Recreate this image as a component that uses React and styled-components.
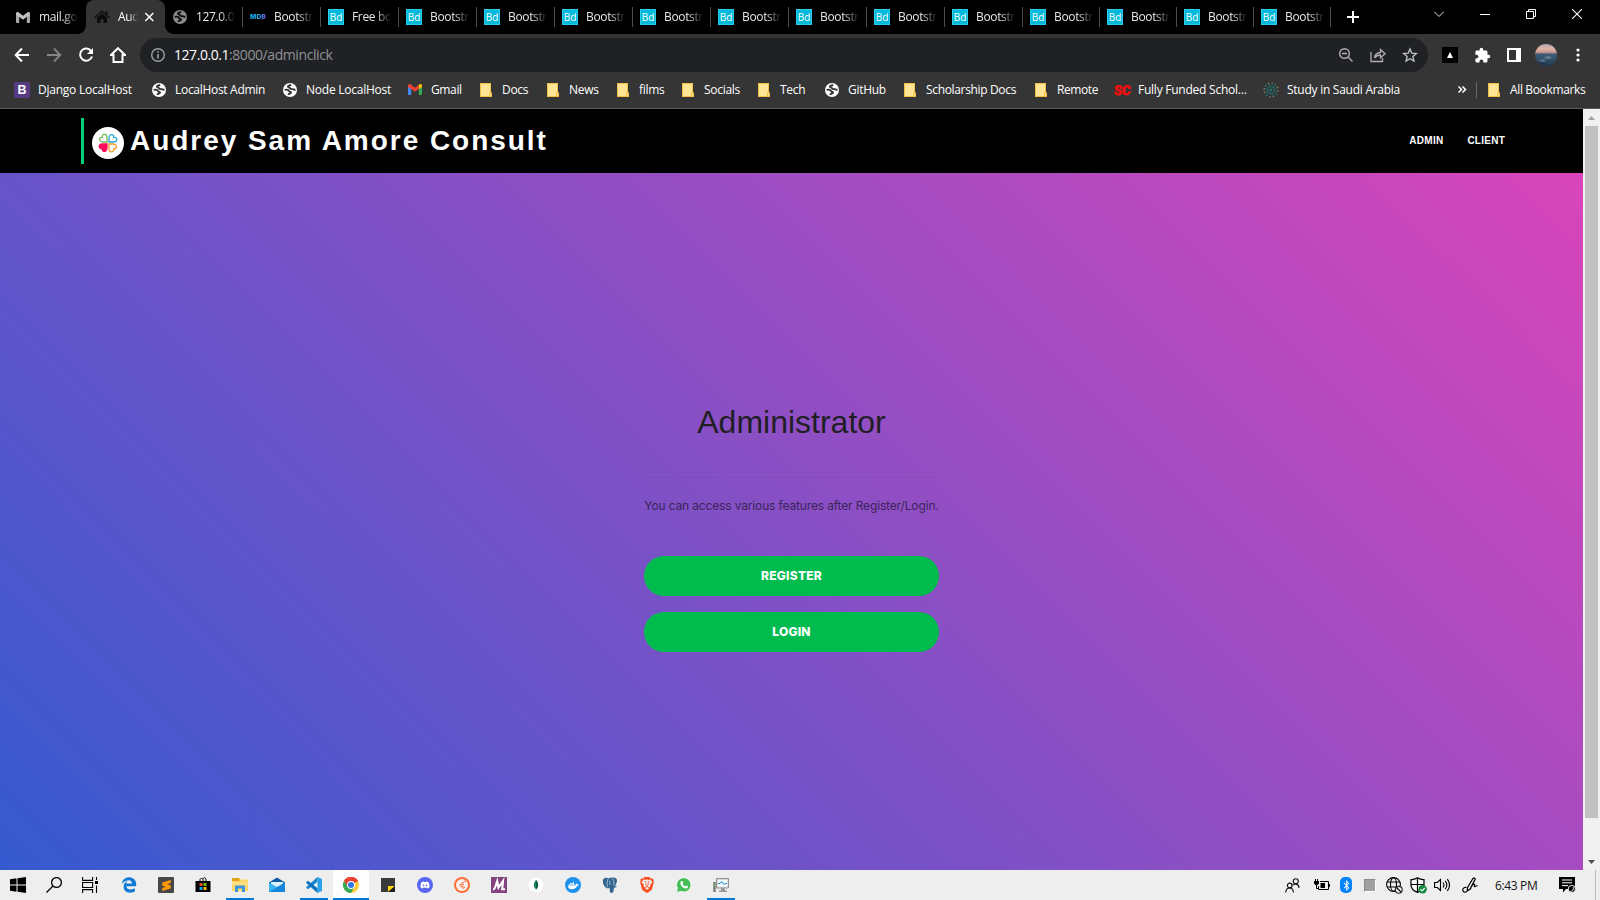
import React from "react";
import styled, { createGlobalStyle, css } from "styled-components";
import { FaDiscord, FaDocker, FaBluetoothB } from "react-icons/fa";
import { FaEdgeLegacy } from "react-icons/fa6";
import { SiBrave, SiSublimetext } from "react-icons/si";
import { MdExtension } from "react-icons/md";

const UI_FONT = `"Open Sans", "Noto Sans", sans-serif`;

const GlobalStyle = createGlobalStyle`
  *, *::before, *::after { box-sizing: border-box; }
  body { margin: 0; overflow: hidden; font-family: ${UI_FONT}; }
  svg { display: block; flex: none; }
`;

const Screen = styled.div`
  width: 1600px;
  height: 900px;
  display: flex;
  flex-direction: column;
  background: #000;
  white-space: nowrap;
`;

/* ---------- browser chrome ---------- */

const TabStrip = styled.div`
  height: 34px;
  flex: none;
  display: flex;
  padding-left: 8px;
  background: #000;
`;

const Tab = styled.div`
  width: ${(p) => p.$width}px;
  display: flex;
  align-items: center;
  padding-left: 7px;
  color: #e6e6e6;
`;

const ActiveTab = styled.div`
  position: relative;
  width: 79px;
  display: flex;
  align-items: center;
  padding-left: 8px;
  border-radius: 8px 8px 0 0;
  background: #353535;
  color: #fff;
  &::before,
  &::after {
    content: "";
    position: absolute;
    bottom: 0;
    width: 8px;
    height: 8px;
  }
  &::before {
    left: -8px;
    background: radial-gradient(circle at 0 0, transparent 7.5px, #353535 8px);
  }
  &::after {
    right: -8px;
    background: radial-gradient(circle at 100% 0, transparent 7.5px, #353535 8px);
  }
`;

const TabIcon = styled.div`
  width: 16px;
  height: 16px;
  flex: none;
  margin-right: 8px;
  display: flex;
  align-items: center;
  justify-content: center;
`;

const TabTitle = styled.div`
  width: ${(p) => p.$width || 41}px;
  flex: none;
  font-size: 12px;
  line-height: 18px;
  letter-spacing: -0.35px;
  mask-image: linear-gradient(to right, #000 ${(p) => (p.$width ? 50 : 58)}%, transparent 96%);
`;

const TabDivider = styled.div`
  width: 1px;
  height: 20px;
  margin-left: auto;
  background: #4d4d4d;
`;

const BdMark = styled.div`
  width: 16px;
  height: 16px;
  border: 1px solid #27cdea;
  background: #00b8da;
  color: #fff;
  font: 10px/14px ${UI_FONT};
  letter-spacing: -0.1px;
  text-align: center;
`;

const MdbMark = styled.div`
  font: 900 6.5px/10px Inter, sans-serif;
  letter-spacing: 0.2px;
  background: linear-gradient(90deg, #18a8e8 55%, #7b50e0);
  background-clip: text;
  color: transparent;
`;

const NewTab = styled.div`
  display: flex;
  align-items: center;
  margin-left: 16px;
`;

const WindowControls = styled.div`
  display: flex;
  height: 28px;
  align-items: center;
  margin-left: auto;
`;

const WindowButton = styled.div`
  width: 46px;
  display: flex;
  justify-content: center;
`;

const Toolbar = styled.div`
  height: 38px;
  flex: none;
  display: flex;
  align-items: center;
  padding: 4px 0 0 6px;
  background: #353535;
`;

const ToolButton = styled.div`
  width: 32px;
  flex: none;
  display: flex;
  justify-content: center;
  color: #fff;
`;

const AddressBar = styled.div`
  width: 1288px;
  flex: none;
  height: 34px;
  margin: 0 6px;
  display: flex;
  align-items: center;
  padding: 0 2px 0 10px;
  border-radius: 17px;
  background: #202124;
  color: #b9bbbe;
`;

const Url = styled.div`
  flex: 1;
  margin-left: 8px;
  color: #8f9194;
  font-size: 14px;
  line-height: 18px;
  letter-spacing: -0.42px;
  b {
    color: #fff;
    font-weight: 400;
    letter-spacing: -0.45px;
  }
`;

const ArrowTile = styled.div`
  width: 16px;
  height: 16px;
  display: flex;
  align-items: center;
  justify-content: center;
  background: #000;
`;

const Avatar = styled.div`
  width: 22px;
  height: 22px;
  border-radius: 50%;
  background:
    radial-gradient(ellipse 5px 2px at 60% 62%, #7a8da0, transparent),
    radial-gradient(ellipse 4px 2px at 35% 76%, #6d8196, transparent),
    radial-gradient(ellipse 7px 3px at 30% 90%, #1d3045, transparent),
    linear-gradient(#a9a6b5 0%, #e4b5a4 22%, #c29692 38%, #415a75 46%, #32526c 65%, #243b52 100%);
`;

const BookmarkBar = styled.div`
  height: 37px;
  flex: none;
  display: flex;
  align-items: center;
  padding: 0 0 1px 14px;
  border-bottom: 1px solid #5e5e5e;
  background: #353535;
  color: #fff;
`;

const Bookmark = styled.div`
  width: ${(p) => p.$width}px;
  flex: none;
  display: flex;
  align-items: center;
  font-size: 12px;
  line-height: 18px;
  letter-spacing: ${(p) => p.$spacing ?? -0.28}px;
`;

const BookmarkIcon = styled.div`
  width: 16px;
  height: 16px;
  flex: none;
  margin-right: 8px;
  display: flex;
  align-items: center;
  justify-content: center;
`;

const BootstrapMark = styled.div`
  width: 16px;
  height: 16px;
  border-radius: 2px;
  background: #573b85;
  color: #fff;
  font: bold 12.5px/16px "Liberation Sans", sans-serif;
  text-align: center;
`;

const ScMark = styled.div`
  color: #f50d0d;
  -webkit-text-stroke: 0.4px #f50d0d;
  font: 900 13.5px/16px "Roboto", sans-serif;
  letter-spacing: -0.6px;
  transform: skewX(-5deg);
`;

const Overflow = styled.div`
  width: 18px;
  margin-left: auto;
  display: flex;
`;

const BarDivider = styled.div`
  width: 1px;
  height: 16px;
  margin-right: 9px;
  background: #696969;
`;

/* ---------- page ---------- */

const Viewport = styled.div`
  height: 761px;
  flex: none;
  display: flex;
`;

const Page = styled.main`
  width: 1583px;
  display: flex;
  flex-direction: column;
`;

const SiteHeader = styled.header`
  height: 64px;
  flex: none;
  display: flex;
  align-items: center;
  justify-content: space-between;
  padding: 0 78px 0 81px;
  background: #000;
  color: #fff;
`;

const Brand = styled.div`
  height: 46px;
  display: flex;
  align-items: center;
  padding-left: 8px;
  border-left: 3px solid #00d27a;
  font: bold 28px/46px "Liberation Sans", Arial, sans-serif;
  letter-spacing: 1.96px;
`;

const BrandLogo = styled.div`
  width: 32px;
  height: 32px;
  margin: 4px 6px 0 0;
  display: flex;
  align-items: center;
  justify-content: center;
  border-radius: 50%;
  background: #fff;
`;

const SiteNav = styled.nav`
  display: flex;
  gap: 24px;
  font: bold 10px/16px "Liberation Sans", Arial, sans-serif;
  letter-spacing: 0.25px;
`;

const Hero = styled.section`
  flex: 1;
  display: flex;
  justify-content: center;
  padding-top: 230px;
  background: linear-gradient(45deg, #355ad0, #d945ba);
`;

const Card = styled.div`
  width: 295px;
  display: flex;
  flex-direction: column;
`;

const Title = styled.h1`
  margin: 0;
  color: #1f1f24;
  font: 400 32px/38px "Liberation Sans", Arial, sans-serif;
  text-align: center;
`;

const Rule = styled.div`
  height: 1px;
  margin-top: 36px;
  background: rgba(60, 30, 120, 0.08);
`;

const Lead = styled.p`
  margin: 18px 0 41px;
  color: #3a2459;
  font: 400 12px/19px Inter, sans-serif;
  letter-spacing: -0.15px;
  text-align: center;
`;

const ActionButton = styled.button`
  height: 40px;
  margin-bottom: 16px;
  padding: 0;
  border: 0;
  border-radius: 20px;
  background: #00bc4f;
  color: #fff;
  font: 800 12px/38px Inter, sans-serif;
  letter-spacing: 0.25px;
`;

const Scrollbar = styled.div`
  width: 17px;
  display: flex;
  flex-direction: column;
  justify-content: space-between;
  align-items: center;
  background: #f1f1f1;
`;

const ScrollArrow = styled.div`
  height: 17px;
  display: flex;
  align-items: center;
`;

const ScrollThumb = styled.div`
  width: 13px;
  height: 692px;
  margin-bottom: auto;
  background: #c1c1c1;
`;

/* ---------- taskbar ---------- */

const Taskbar = styled.div`
  height: 30px;
  flex: none;
  display: flex;
  background: #eee;
`;

const SystemButton = styled.div`
  width: 36px;
  display: flex;
  align-items: center;
  justify-content: center;
`;

const PinnedApps = styled.div`
  display: flex;
  margin-left: 3px;
`;

const TaskButton = styled.div`
  width: 36px;
  margin-right: 1px;
  display: flex;
  align-items: center;
  justify-content: center;
  ${(p) =>
    p.$running &&
    css`
      background: linear-gradient(#0078d7, #0078d7) center bottom / 28px 2px no-repeat;
    `}
  ${(p) =>
    p.$focused &&
    css`
      border-bottom: 2px solid #0078d7;
      padding-top: 2px;
      background: #fdfdfd;
    `}
`;

const Tile = styled.div`
  width: 16px;
  height: 16px;
  display: flex;
  align-items: center;
  justify-content: center;
  border-radius: ${(p) => p.$radius || 0};
  background: ${(p) => p.$bg};
  color: ${(p) => p.$color || "#fff"};
`;

const Tray = styled.div`
  margin-left: auto;
  display: flex;
  align-items: center;
`;

const TrayIcon = styled.div`
  width: ${(p) => p.$width || 24}px;
  display: flex;
  justify-content: center;
`;

const BluetoothPill = styled.div`
  width: 12px;
  height: 16px;
  display: flex;
  align-items: center;
  justify-content: center;
  border-radius: 5px;
  background: #0082fc;
  color: #fff;
`;

const GraySquare = styled.div`
  width: 12px;
  height: 13px;
  border: 1px solid #8a8a8a;
  border-right-color: #fff;
  border-bottom-color: #fff;
  background: #a0a0a0;
`;

const Clock = styled.div`
  width: 60px;
  padding-left: 9px;
  color: #111;
  font-size: 12px;
  letter-spacing: -0.35px;
`;

const ShowDesktop = styled.div`
  width: 5px;
  height: 30px;
  margin-left: 7px;
  border-left: 1px solid #bdbdbd;
`;

/* ---------- icons ---------- */

const Line = ({ size = 16, box = 16, w = 1, color = "currentColor", children }) => (
  <svg width={size} height={size} viewBox={`0 0 ${box} ${box}`} fill="none" stroke={color} strokeWidth={w}>
    {children}
  </svg>
);

const Globe = ({ color = "#fff", hole = "#353535" }) => (
  <svg width="14" height="14" viewBox="0 0 14 14">
    <circle cx="7" cy="7" r="7" fill={color} />
    <path
      d="M8.200 2C7 2.400 5.300 2.300 4.900 3.400c-.2 1.100 1.600.8 2 1.700.3.900 1.700 1.100 2.700 1 .9 0 1.100.9 2.900.7M1.600 6.900c1.400-.3 2.900-.4 3.800.3.700.7.4 1.300 1.600 1.500 1.400.2 1.300 1.200.2 1.700-.8.4-1.800.2-1.800 1.500"
      fill="none"
      stroke={hole}
      strokeWidth="1.900"
    />
  </svg>
);

const MailM = ({ mono }) => {
  const c = mono ? ["#a8a8a8", "#c2c2c2", "#bdbdbd", "#a8a8a8"] : ["#4285f4", "#ea4335", "#fbbc04", "#34a853"];
  return (
    <svg width="14" height="11" viewBox="0 0 14 11">
      <path d="M0 3h3.200v8H1a1 1 0 0 1-1-1z" fill={c[0]} />
      <path d="M10.800 3H14v7a1 1 0 0 1-1 1h-2.200z" fill={c[3]} />
      <path d="M0 1.700C0 .2 1.500-.4 2.700.5L7 3.800 11.300.5 10.800 4.800 7 7.700 3.200 4.900 0 2.900z" fill={c[1]} />
      <path d="M10.800 1l.5-.5C12.500-.4 14 .2 14 1.700V3l-3.200 2.200z" fill={c[2]} />
    </svg>
  );
};

const Folder = () => (
  <svg width="12" height="14" viewBox="0 0 12 14">
    <path d="M0 0h11v9.500h1V14H0z" fill="#ffe594" />
    <path d="M.5.500h10v9.500M.500 0v13.500h11V10h-2v3.500" fill="none" stroke="#f3bf45" />
  </svg>
);

const HouseSolid = () => (
  <svg width="16" height="14" viewBox="0 0 16 14" fill="#0c0c0c">
    <path d="M8 3.400l5 4.200V13H9.500V9.500h-3V13H3V7.600z" />
    <path d="M8 .6L11.500 3.500V1.500h2v3.700L16 7.300l-.8 1L8 2.300.8 8.300 0 7.300z" />
  </svg>
);

const SaudiMark = () => (
  <svg width="16" height="16" viewBox="-8 -8 16 16" fill="none">
    {Array.from({ length: 12 }, (_, i) => (
      <g key={i} transform={`rotate(${i * 30})`}>
        <path d="M0-2.500Q1.600-3.500 1-5" stroke={i % 2 ? "#187b83" : "#276b56"} strokeWidth="1" />
        <circle cx="1.100" cy="-6.800" r=".8" fill={["#7c8795", "#188b8e", "#81935b"][i % 3]} />
      </g>
    ))}
    <circle r="1.300" fill="#167e75" />
  </svg>
);

const BrandHearts = () => {
  const leaf = "M-1-1H-4.800C-8-1-9.200-3.300-7.900-5-7.200-5.800-6.200-5.700-5.800-5.600-6-7.400-5-8.800-3.500-8.800-1.800-8.800-1-7.300-1-5.200z";
  return (
    <svg width="20" height="20" viewBox="-10 -10 20 20" fill="none" strokeWidth="1.300">
      <path d={leaf} stroke="#72bf58" />
      <path d={leaf} stroke="#24a5d8" transform="rotate(90)" />
      <path d={leaf} stroke="#f59a23" transform="rotate(180)" />
      <path d={leaf} stroke="#ff0b59" fill="#ff0b59" transform="rotate(270)" />
    </svg>
  );
};

const WindowsLogo = () => (
  <svg width="16" height="16" viewBox="0 0 16 16">
    <path d="M0 2.200L6.500 1.300V7.500H0zM7.500 1.200L16 0v7.500H7.500zM0 8.500h6.500v6.200L0 13.800zM7.500 8.500H16V16L7.500 14.800z" />
  </svg>
);

const TaskViewIcon = () => (
  <Line w={1.1} color="#000">
    <path d="M.6 0v3.400h10V0M.6 16v-3.400h10V16M.6 5.500h10v5H.6zM14.500 0v3M14.500 8.500V16" />
    <path d="M13 4h3v3h-3z" fill="#000" stroke="none" />
  </Line>
);

const StoreIcon = () => (
  <svg width="16" height="16" viewBox="0 0 16 16">
    <path d="M5 4V2.500Q6.500-.5 8 2.500V4M7.500 2Q10-.8 11 2.500V4" fill="none" stroke="#000" />
    <path d="M.5 4h15v11h-15z" />
    <path d="M4.500 6h3v3h-3z" fill="#f25022" />
    <path d="M8.500 6h3v3h-3z" fill="#7fba00" />
    <path d="M4.500 10h3v3h-3z" fill="#00a4ef" />
    <path d="M8.500 10h3v3h-3z" fill="#ffb900" />
  </svg>
);

const ExplorerIcon = () => (
  <svg width="16" height="16" viewBox="0 0 16 16">
    <path d="M0 1h7l1 1.500h8V14H0z" fill="#ffd768" />
    <path d="M0 1h7.500v3H0z" fill="#e3a21a" />
    <path d="M3 15V8.500h10V15h-3v-3.500H6V15z" fill="#3e95df" />
    <path d="M0 5h16v3H0z" fill="#ffdf7e" />
  </svg>
);

const MailIcon = () => (
  <svg width="16" height="16" viewBox="0 0 16 16">
    <path d="M0 5.500L8 .5l8 5V8H0z" fill="#0b5aa5" />
    <path d="M2 5h12v4l-6 2-6-2z" fill="#dff2fc" />
    <path d="M0 5.500l8 4.500 8-4.500V15H0z" fill="#36b4f2" />
    <path d="M0 15L16 5.500V15z" fill="#1687dc" />
  </svg>
);

const VsCodeIcon = () => (
  <svg width="16" height="16" viewBox="0 0 16 16">
    <path d="M11.500 0L16 2v12l-4.500 2z" fill="#2aa2ec" />
    <path d="M11.500 0v4.800L2 12.300.3 11.100V10z" fill="#1684cf" />
    <path d="M11.500 16v-4.800L2 3.700.3 4.900V6z" fill="#0871bd" />
  </svg>
);

const ChromeIcon = () => (
  <svg width="16" height="16" viewBox="0 0 16 16">
    <circle cx="8" cy="8" r="8" fill="#ffcd40" />
    <path d="M8 8L1.070 4A8 8 0 0 1 14.930 4z" fill="#ea4335" />
    <path d="M8 4.200H15A8 8 0 0 0 1.070 4L4.700 10z" fill="#ea4335" />
    <path d="M1.070 4A8 8 0 0 0 8 16l3.500-6.100L4.700 10z" fill="#34a853" />
    <circle cx="8" cy="8" r="3.900" fill="#fff" />
    <circle cx="8" cy="8" r="3" fill="#3378e8" />
  </svg>
);

const NotesIcon = () => (
  <svg width="14" height="14" viewBox="0 0 14 14">
    <path d="M0 0h14v14H0z" fill="#3a3a3a" />
    <path d="M7 14V8h7z" fill="#ffd900" />
    <path d="M7 14l7-6v6z" fill="#222" />
  </svg>
);

const PostmanIcon = () => (
  <svg width="16" height="16" viewBox="0 0 16 16">
    <circle cx="8" cy="8" r="8" fill="#ff6c37" />
    <circle cx="8" cy="8" r="6" fill="#f7f1ef" />
    <path d="M12 3.500L5.500 8l4 4M7 8l3-.5M8 9.500l3 1" fill="none" stroke="#ff6c37" strokeWidth="1" />
  </svg>
);

const ZigzagIcon = () => (
  <Line color="#fff" w={2.1}>
    <path d="M2 12.300c2.200.5 2.700-4 4.200-8.300L7.500 10.500 12 4l-.8 8.300h2.800" />
  </Line>
);

const MongoIcon = () => (
  <svg width="16" height="16" viewBox="0 0 16 16">
    <circle cx="8" cy="8" r="7.500" fill="#fff" />
    <path d="M8 3c3 3.500 2.700 7 0 9.500C5.300 10 5 6.500 8 3z" fill="#168557" />
    <path d="M8 3c3 3.500 2.700 7 0 9.500z" fill="#0c5d43" />
  </svg>
);

const ElephantIcon = () => (
  <svg width="16" height="16" viewBox="0 0 16 16">
    <path
      d="M1 2.500C2.500.3 5 .6 6.500 1.200 9 .3 12.500.2 14.300 1.500c1.500 1.800.3 5-1.300 7.800l2 .3c-.7 1-2 1.200-3 1.100L11.500 14c-.4 2.500-3.500 2.500-3.700.2L7.500 10.500c-.8.7-1.500.9-2.500.8C2.500 11 .2 5.500 1 2.500z"
      fill="#336791"
    />
    <path
      d="M6.300 1.800C4.800 4 5.200 6 5.300 8.500M10.500 1.500c1.800 1.700 1.500 4.500 1.300 7M7.500 3.800q1 1.500.3 4.200M4.500 10l1.500-1.200"
      fill="none"
      stroke="#d5dfe8"
      strokeWidth=".7"
    />
  </svg>
);

const WhatsAppTile = () => (
  <svg width="16" height="16" viewBox="0 0 16 16">
    <path d="M.6 15.400l.7-4.400A7.200 7.200 0 1 1 5 14.500z" fill="#45bd57" stroke="#fff" strokeWidth=".8" />
    <path
      d="M5.300 4.200c1-.6 1.500 0 2 1.600L6.600 7c.6 1.300 1.400 2 2.700 2.500l1-1c1.600.8 2 1 1.500 2-.8 1.300-2.400 1.200-4.200.2C5 9.300 3 5.700 5.300 4.200z"
      fill="#fff"
    />
  </svg>
);

const MonitorIcon = () => (
  <svg width="16" height="15" viewBox="0 0 16 15">
    <path d="M3.500.5h12v9.500h-12z" fill="#d8d8d8" stroke="#929292" />
    <path d="M5 2h9v6.500H5z" fill="#f4fbff" />
    <path d="M5 5.500h2L8.500 3.500l2.500 3 1.500-1H14" fill="none" stroke="#1685c9" />
    <path d="M8 10h4v2.500h2V14H6v-1.500h2z" fill="#999" />
    <path d="M.3 4h2.400v10H.3z" fill="#777" />
    <path d="M1 6h1v2H1z" fill="#4dc04a" />
  </svg>
);

const PeopleIcon = () => (
  <Line size={15} w={1.2} color="#111">
    <circle cx="5" cy="8" r="2.500" />
    <circle cx="11.500" cy="3.500" r="2.700" />
    <path d="M.8 15.500C1 12 3 10.700 5 10.700s3.800 1.300 4 4.800M8 7.800c2-2 6.500-2.300 7 2.700" />
  </Line>
);

const BatteryIcon = () => (
  <svg width="16" height="12" viewBox="0 0 16 12" fill="none" stroke="#000">
    <path d="M1.500 0v2M3.500 0v2M2.500 6v3.500h2M6 2.500h8.500v8h-10V7M15.500 5v3" />
    <path d="M0 2h5v2.500L3.500 6h-2L0 4.500zM6.500 4H11v5H6.500z" fill="#000" stroke="none" />
  </svg>
);

const NetworkIcon = () => (
  <svg width="17" height="17" viewBox="0 0 17 17" fill="none" stroke="#000" strokeWidth="1.100">
    <circle cx="7.500" cy="7.500" r="6.900" />
    <ellipse cx="7.500" cy="7.500" rx="3" ry="6.900" />
    <path d="M1.200 5h12.600M1.200 10h12.600" />
    <circle cx="12.800" cy="12.800" r="3.400" fill="#eee" stroke="#222" />
    <path d="M10.500 10.500l4.600 4.600" />
  </svg>
);

const ShieldIcon = () => (
  <svg width="17" height="17" viewBox="0 0 17 17" fill="none" stroke="#000" strokeWidth="1.200">
    <path d="M7.500.8Q11 3 14 2.600V8c0 4-3 6-6.500 7.400C4 14 1 12 1 8V2.600Q4 3 7.500.8zM7.500 1v14M1 7.500h13" fill="#fafafa" />
    <circle cx="12.600" cy="12.300" r="4.200" fill="#10893e" stroke="none" />
    <path d="M10.500 12.300l1.600 1.600 2.700-2.900" stroke="#fff" />
  </svg>
);

const SpeakerIcon = () => (
  <Line w={1.1} color="#000">
    <path d="M.6 5.500h2.700L6.500 2.500v11L3.300 10.500H.6zM9 5.500q2 2.500 0 5M11.200 3.800q3.300 4.200 0 8.400M13.300 2.200q4.500 5.800 0 11.600" />
  </Line>
);

const PenIcon = () => (
  <Line w={1.2} color="#000">
    <path d="M5.500 10.500L11 1.500q1.700-1.300 2.300.6L8 12l-2.800 2zM5.200 14C4 15.800 1.500 15.500.8 13.500.5 11 2.500 10 4.500 10.500M8.500 12.500C8.500 10 11 6.500 12.500 7.200c.6.800-1 2.300 0 2.500l3-1.200" />
  </Line>
);

const NoticeIcon = () => (
  <svg width="17" height="16" viewBox="0 0 17 16">
    <path d="M0 0h16v12H7l-3 3.500V12H0z" />
    <path d="M3 3h10M3 5.800h10M3 8.600h6" stroke="#fff" />
    <circle cx="12.800" cy="12" r="3.600" fill="#000" stroke="#eee" />
    <path d="M11 14.500c3 0 3.500-2 3.300-4.300" stroke="#eee" fill="none" />
  </svg>
);

/* ---------- data ---------- */

const bdTabs = ["Free bo", ...Array(12).fill("Bootstr")];

const globe = <Globe />;
const folder = <Folder />;
const bookmarks = [
  { icon: <BootstrapMark>B</BootstrapMark>, label: "Django LocalHost", width: 137, spacing: -0.24 },
  { icon: globe, label: "LocalHost Admin", width: 131, spacing: -0.3 },
  { icon: globe, label: "Node LocalHost", width: 125, spacing: -0.24 },
  { icon: <MailM />, label: "Gmail", width: 71, spacing: -0.36 },
  { icon: folder, label: "Docs", width: 67 },
  { icon: folder, label: "News", width: 70 },
  { icon: folder, label: "films", width: 65 },
  { icon: folder, label: "Socials", width: 76 },
  { icon: folder, label: "Tech", width: 68 },
  { icon: globe, label: "GitHub", width: 78 },
  { icon: folder, label: "Scholarship Docs", width: 131, spacing: -0.34 },
  { icon: folder, label: "Remote", width: 81, spacing: -0.42 },
  { icon: <ScMark>SC</ScMark>, label: "Fully Funded Schol...", width: 149, spacing: -0.24 },
  { icon: <SaudiMark />, label: "Study in Saudi Arabia", width: 140, spacing: -0.26 },
];

const apps = [
  { icon: <FaEdgeLegacy size={16} color="#0f7ad6" /> },
  {
    icon: (
      <Tile $bg="#484848" $radius="1px" $color="#ff9800">
        <SiSublimetext size={11} />
      </Tile>
    ),
  },
  { icon: <StoreIcon /> },
  { icon: <ExplorerIcon />, running: true },
  { icon: <MailIcon /> },
  { icon: <VsCodeIcon />, running: true },
  { icon: <ChromeIcon />, focused: true },
  { icon: <NotesIcon /> },
  {
    icon: (
      <Tile $bg="#5865f2" $radius="50%">
        <FaDiscord size={10} />
      </Tile>
    ),
  },
  { icon: <PostmanIcon /> },
  {
    icon: (
      <Tile $bg="#84427f">
        <ZigzagIcon />
      </Tile>
    ),
  },
  { icon: <MongoIcon /> },
  {
    icon: (
      <Tile $bg="#1d91ec" $radius="50%">
        <FaDocker size={11} />
      </Tile>
    ),
  },
  { icon: <ElephantIcon /> },
  { icon: <SiBrave size={16} color="#fb4c1e" /> },
  { icon: <WhatsAppTile /> },
  { icon: <MonitorIcon />, running: true },
];

export default function App() {
  return (
    <Screen>
      <GlobalStyle />
      <TabStrip>
        <Tab $width={78}>
          <TabIcon>
            <MailM mono />
          </TabIcon>
          <TabTitle>mail.go</TabTitle>
        </Tab>
        <ActiveTab>
          <TabIcon>
            <HouseSolid />
          </TabIcon>
          <TabTitle $width={21}>Aud</TabTitle>
          <Line size={16} box={16} w={1.5}>
            <path d="M6.300 4l8 8M14.300 4l-8 8" />
          </Line>
        </ActiveTab>
        <Tab $width={78}>
          <TabIcon>
            <Globe color="#8b8b8b" hole="#111" />
          </TabIcon>
          <TabTitle>127.0.0</TabTitle>
          <TabDivider />
        </Tab>
        <Tab $width={78}>
          <TabIcon>
            <MdbMark>MDB</MdbMark>
          </TabIcon>
          <TabTitle>Bootstr</TabTitle>
          <TabDivider />
        </Tab>
        {bdTabs.map((title, i) => (
          <Tab key={i} $width={i < 9 ? 78 : 77}>
            <TabIcon>
              <BdMark>Bd</BdMark>
            </TabIcon>
            <TabTitle>{title}</TabTitle>
            <TabDivider />
          </Tab>
        ))}
        <NewTab>
          <Line size={12} box={12} w={2} color="#fff">
            <path d="M6 0v12M0 6h12" />
          </Line>
        </NewTab>
        <WindowControls>
          <WindowButton>
            <Line size={10} box={10} color="#ddd">
              <path d="M0 2.500l5 5 5-5" />
            </Line>
          </WindowButton>
          <WindowButton>
            <Line size={10} box={10} color="#fff">
              <path d="M0 5.500h10" />
            </Line>
          </WindowButton>
          <WindowButton>
            <Line size={10} box={10} color="#fff">
              <path d="M.5 2.500h7v7h-7zM2.500 2.500v-2h7v7h-2" />
            </Line>
          </WindowButton>
          <WindowButton>
            <Line size={10} box={10} color="#fff" w={1.1}>
              <path d="M0 0l10 10M10 0L0 10" />
            </Line>
          </WindowButton>
        </WindowControls>
      </TabStrip>

      <Toolbar>
        <ToolButton>
          <Line w={2}>
            <path d="M15 8H2M8 1.500L1.700 8 8 14.500" />
          </Line>
        </ToolButton>
        <ToolButton>
          <Line w={1.8} color="#858585">
            <path d="M1 8h13M8 1.500L14.300 8 8 14.500" />
          </Line>
        </ToolButton>
        <ToolButton>
          <Line w={2}>
            <path d="M13.300 4.300A6.100 6.100 0 1 0 14 9.500" />
            <path d="M15 1v6H9z" fill="currentColor" stroke="none" />
          </Line>
        </ToolButton>
        <ToolButton>
          <Line w={2}>
            <path d="M3.500 15h9V8H15L8 1.200 1 8h2.500z" />
          </Line>
        </ToolButton>
        <AddressBar>
          <Line w={1.4} color="#9aa0a6">
            <circle cx="8" cy="8" r="6.300" />
            <path d="M8 7v4.500M8 4.300v1.500" strokeWidth="1.600" />
          </Line>
          <Url>
            <b>127.0.0.1</b>:8000/adminclick
          </Url>
          <ToolButton>
            <Line w={1.4} color="#aeb0b3">
              <circle cx="6.500" cy="6.500" r="4.800" />
              <path d="M4 6.500h5M10 10l4.500 4.500" />
            </Line>
          </ToolButton>
          <ToolButton>
            <Line w={1.3} color="#aeb0b3">
              <path d="M1 5v9.500h11.500V11M4.500 11C5 7 7 5.700 10.500 5.500V2.500L15 6.700l-4.500 4V8C8 8 6 8.800 4.500 11z" />
            </Line>
          </ToolButton>
          <ToolButton>
            <Line w={1.4} color="#bfc1c4">
              <path d="M8 2l1.800 4.200 4.500.4-3.400 3 1 4.400L8 11.700 4.100 14l1-4.400-3.400-3 4.500-.4z" />
            </Line>
          </ToolButton>
        </AddressBar>
        <ToolButton>
          <ArrowTile>
            <svg width="6" height="6" viewBox="0 0 6 6" fill="#fff">
              <path d="M3 0l3 6H0z" />
            </svg>
          </ArrowTile>
        </ToolButton>
        <ToolButton>
          <MdExtension size={17} />
        </ToolButton>
        <ToolButton>
          <svg width="14" height="14" viewBox="0 0 14 14">
            <path d="M0 0h14v14H0zM2 2v10h7V2z" fill="#fff" fillRule="evenodd" />
          </svg>
        </ToolButton>
        <ToolButton>
          <Avatar />
        </ToolButton>
        <ToolButton>
          <svg width="4" height="14" viewBox="0 0 4 14" fill="#fff">
            <circle cx="2" cy="2" r="1.600" />
            <circle cx="2" cy="7" r="1.600" />
            <circle cx="2" cy="12" r="1.600" />
          </svg>
        </ToolButton>
      </Toolbar>

      <BookmarkBar>
        {bookmarks.map((b) => (
          <Bookmark key={b.label} $width={b.width} $spacing={b.spacing}>
            <BookmarkIcon>{b.icon}</BookmarkIcon>
            {b.label}
          </Bookmark>
        ))}
        <Overflow>
          <Line size={9} box={9} w={1.5}>
            <path d="M.5 1.500l3 3-3 3M4.500 1.500l3 3-3 3" />
          </Line>
        </Overflow>
        <BarDivider />
        <Bookmark $width={114} $spacing={-0.36}>
          <BookmarkIcon>{folder}</BookmarkIcon>
          All Bookmarks
        </Bookmark>
      </BookmarkBar>

      <Viewport>
        <Page>
          <SiteHeader>
            <Brand>
              <BrandLogo>
                <BrandHearts />
              </BrandLogo>
              Audrey Sam Amore Consult
            </Brand>
            <SiteNav>
              <span>ADMIN</span>
              <span>CLIENT</span>
            </SiteNav>
          </SiteHeader>
          <Hero>
            <Card>
              <Title>Administrator</Title>
              <Rule />
              <Lead>You can access various features after Register/Login.</Lead>
              <ActionButton>REGISTER</ActionButton>
              <ActionButton>LOGIN</ActionButton>
            </Card>
          </Hero>
        </Page>
        <Scrollbar>
          <ScrollArrow>
            <svg width="7" height="4" viewBox="0 0 7 4" fill="#a3a3a3">
              <path d="M3.500 0L7 4H0z" />
            </svg>
          </ScrollArrow>
          <ScrollThumb />
          <ScrollArrow>
            <svg width="7" height="4" viewBox="0 0 7 4" fill="#505050">
              <path d="M3.500 4L7 0H0z" />
            </svg>
          </ScrollArrow>
        </Scrollbar>
      </Viewport>

      <Taskbar>
        <SystemButton>
          <WindowsLogo />
        </SystemButton>
        <SystemButton>
          <Line w={1.3} color="#000">
            <circle cx="10.500" cy="5.500" r="4.900" />
            <path d="M7 9L.5 15.500" />
          </Line>
        </SystemButton>
        <SystemButton>
          <TaskViewIcon />
        </SystemButton>
        <PinnedApps>
          {apps.map((app, i) => (
            <TaskButton key={i} $running={app.running} $focused={app.focused}>
              {app.icon}
            </TaskButton>
          ))}
        </PinnedApps>
        <Tray>
          <TrayIcon $width={36}>
            <PeopleIcon />
          </TrayIcon>
          <TrayIcon>
            <BatteryIcon />
          </TrayIcon>
          <TrayIcon>
            <BluetoothPill>
              <FaBluetoothB size={11} />
            </BluetoothPill>
          </TrayIcon>
          <TrayIcon>
            <GraySquare />
          </TrayIcon>
          <TrayIcon>
            <NetworkIcon />
          </TrayIcon>
          <TrayIcon>
            <ShieldIcon />
          </TrayIcon>
          <TrayIcon>
            <SpeakerIcon />
          </TrayIcon>
          <TrayIcon $width={32}>
            <PenIcon />
          </TrayIcon>
          <Clock>6:43 PM</Clock>
          <TrayIcon $width={42}>
            <NoticeIcon />
          </TrayIcon>
          <ShowDesktop />
        </Tray>
      </Taskbar>
    </Screen>
  );
}
